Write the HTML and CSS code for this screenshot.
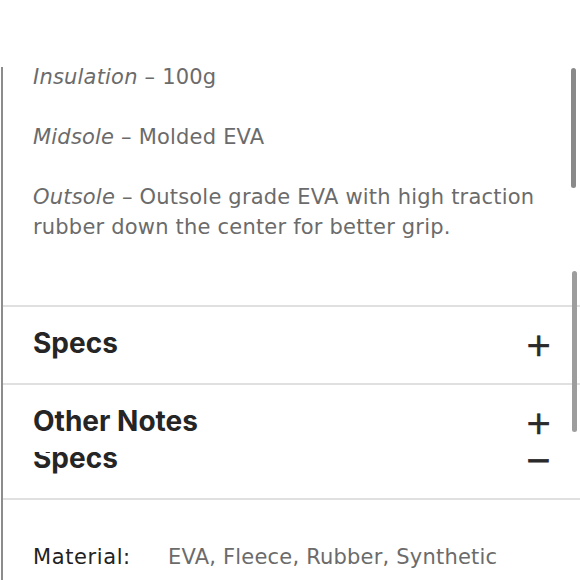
FILE: index.html
```html
<!DOCTYPE html>
<html lang="en">
<head>
    <meta charset="UTF-8">
    <meta name="viewport" content="width=device-width, initial-scale=1.0">
    <title>Product Details</title>
    <link rel="stylesheet" href="styles.css">
</head>
<body>
    <div class="sheet">
        <div class="panel panel-top">
            <div class="details">
                <p><em>Insulation</em> – 100g</p>
                <p><em>Midsole</em> – Molded EVA</p>
                <p><em>Outsole</em> – Outsole grade EVA with high traction rubber down the center for better grip.</p>
            </div>
            <div class="accordion-item">
                <h3>Specs</h3>
                <span class="toggle">+</span>
            </div>
            <div class="accordion-item">
                <h3>Other Notes</h3>
                <span class="toggle">+</span>
            </div>
            <div class="scroll-thumb thumb-one"></div>
        </div>

        <div class="panel panel-bottom">
            <div class="shifted">
                <div class="accordion-item open">
                    <h3>Specs</h3>
                    <span class="toggle">−</span>
                </div>
                <div class="spec-row">
                    <span class="spec-label">Material:</span>
                    <span class="spec-value">EVA, Fleece, Rubber, Synthetic</span>
                </div>
            </div>
        </div>
        <div class="scroll-thumb thumb-two"></div>
    </div>
</body>
</html>
```

FILE: styles.css
```css
body {
    margin: 0;
    padding: 0;
    background: #fff;
    font-family: "DejaVu Sans", "Open Sans", sans-serif;
}
.sheet {
    position: relative;
    margin-top: 67px;
    margin-left: 1px;
    border-left: 2px solid #8c8c8c;
}
.panel {
    position: relative;
    overflow: hidden;
}
.panel-top {
    height: 385px;
}
.panel-bottom {
    height: 128px;
}
.shifted {
    margin-top: -30px;
}
.details {
    display: flow-root;
    padding: 0 30px;
    height: 238px;
}
.details p {
    margin: 0 0 30px 0;
    font-size: 21px;
    line-height: 30px;
    letter-spacing: 0.2px;
    color: #6b6b6b;
}
.details p:first-child {
    margin-top: -5px;
}
.details em {
    font-style: italic;
}
.accordion-item {
    display: flex;
    align-items: center;
    justify-content: space-between;
    height: 76px;
    padding: 0 28px 0 30px;
    border-top: 2px solid #e0e0e0;
}
.accordion-item.open {
    border-top: none;
    border-bottom: 2px solid #e0e0e0;
}
.accordion-item h3 {
    margin: -5px 0 0 0;
    font-family: Inter, "Liberation Sans", sans-serif;
    font-size: 28px;
    font-weight: 700;
    color: #252525;
}
.toggle {
    font-family: "DejaVu Sans", sans-serif;
    font-size: 32px;
    color: #2a2a2a;
    -webkit-text-stroke: 0.6px #2a2a2a;
}
.spec-row {
    display: flex;
    padding: 45px 30px 0 30px;
    font-size: 21px;
    letter-spacing: 0.2px;
}
.spec-label {
    width: 135px;
    color: #222;
    font-weight: 500;
    letter-spacing: 0.6px;
}
.spec-value {
    color: #6b6b6b;
}
.scroll-thumb {
    position: absolute;
    width: 5px;
    border-radius: 3px;
    background: #8a8a8a;
}
.thumb-one {
    right: 4px;
    top: 1px;
    height: 120px;
}
.thumb-two {
    right: 3px;
    top: 204px;
    height: 161px;
    background: #9d9d9d;
}
```
